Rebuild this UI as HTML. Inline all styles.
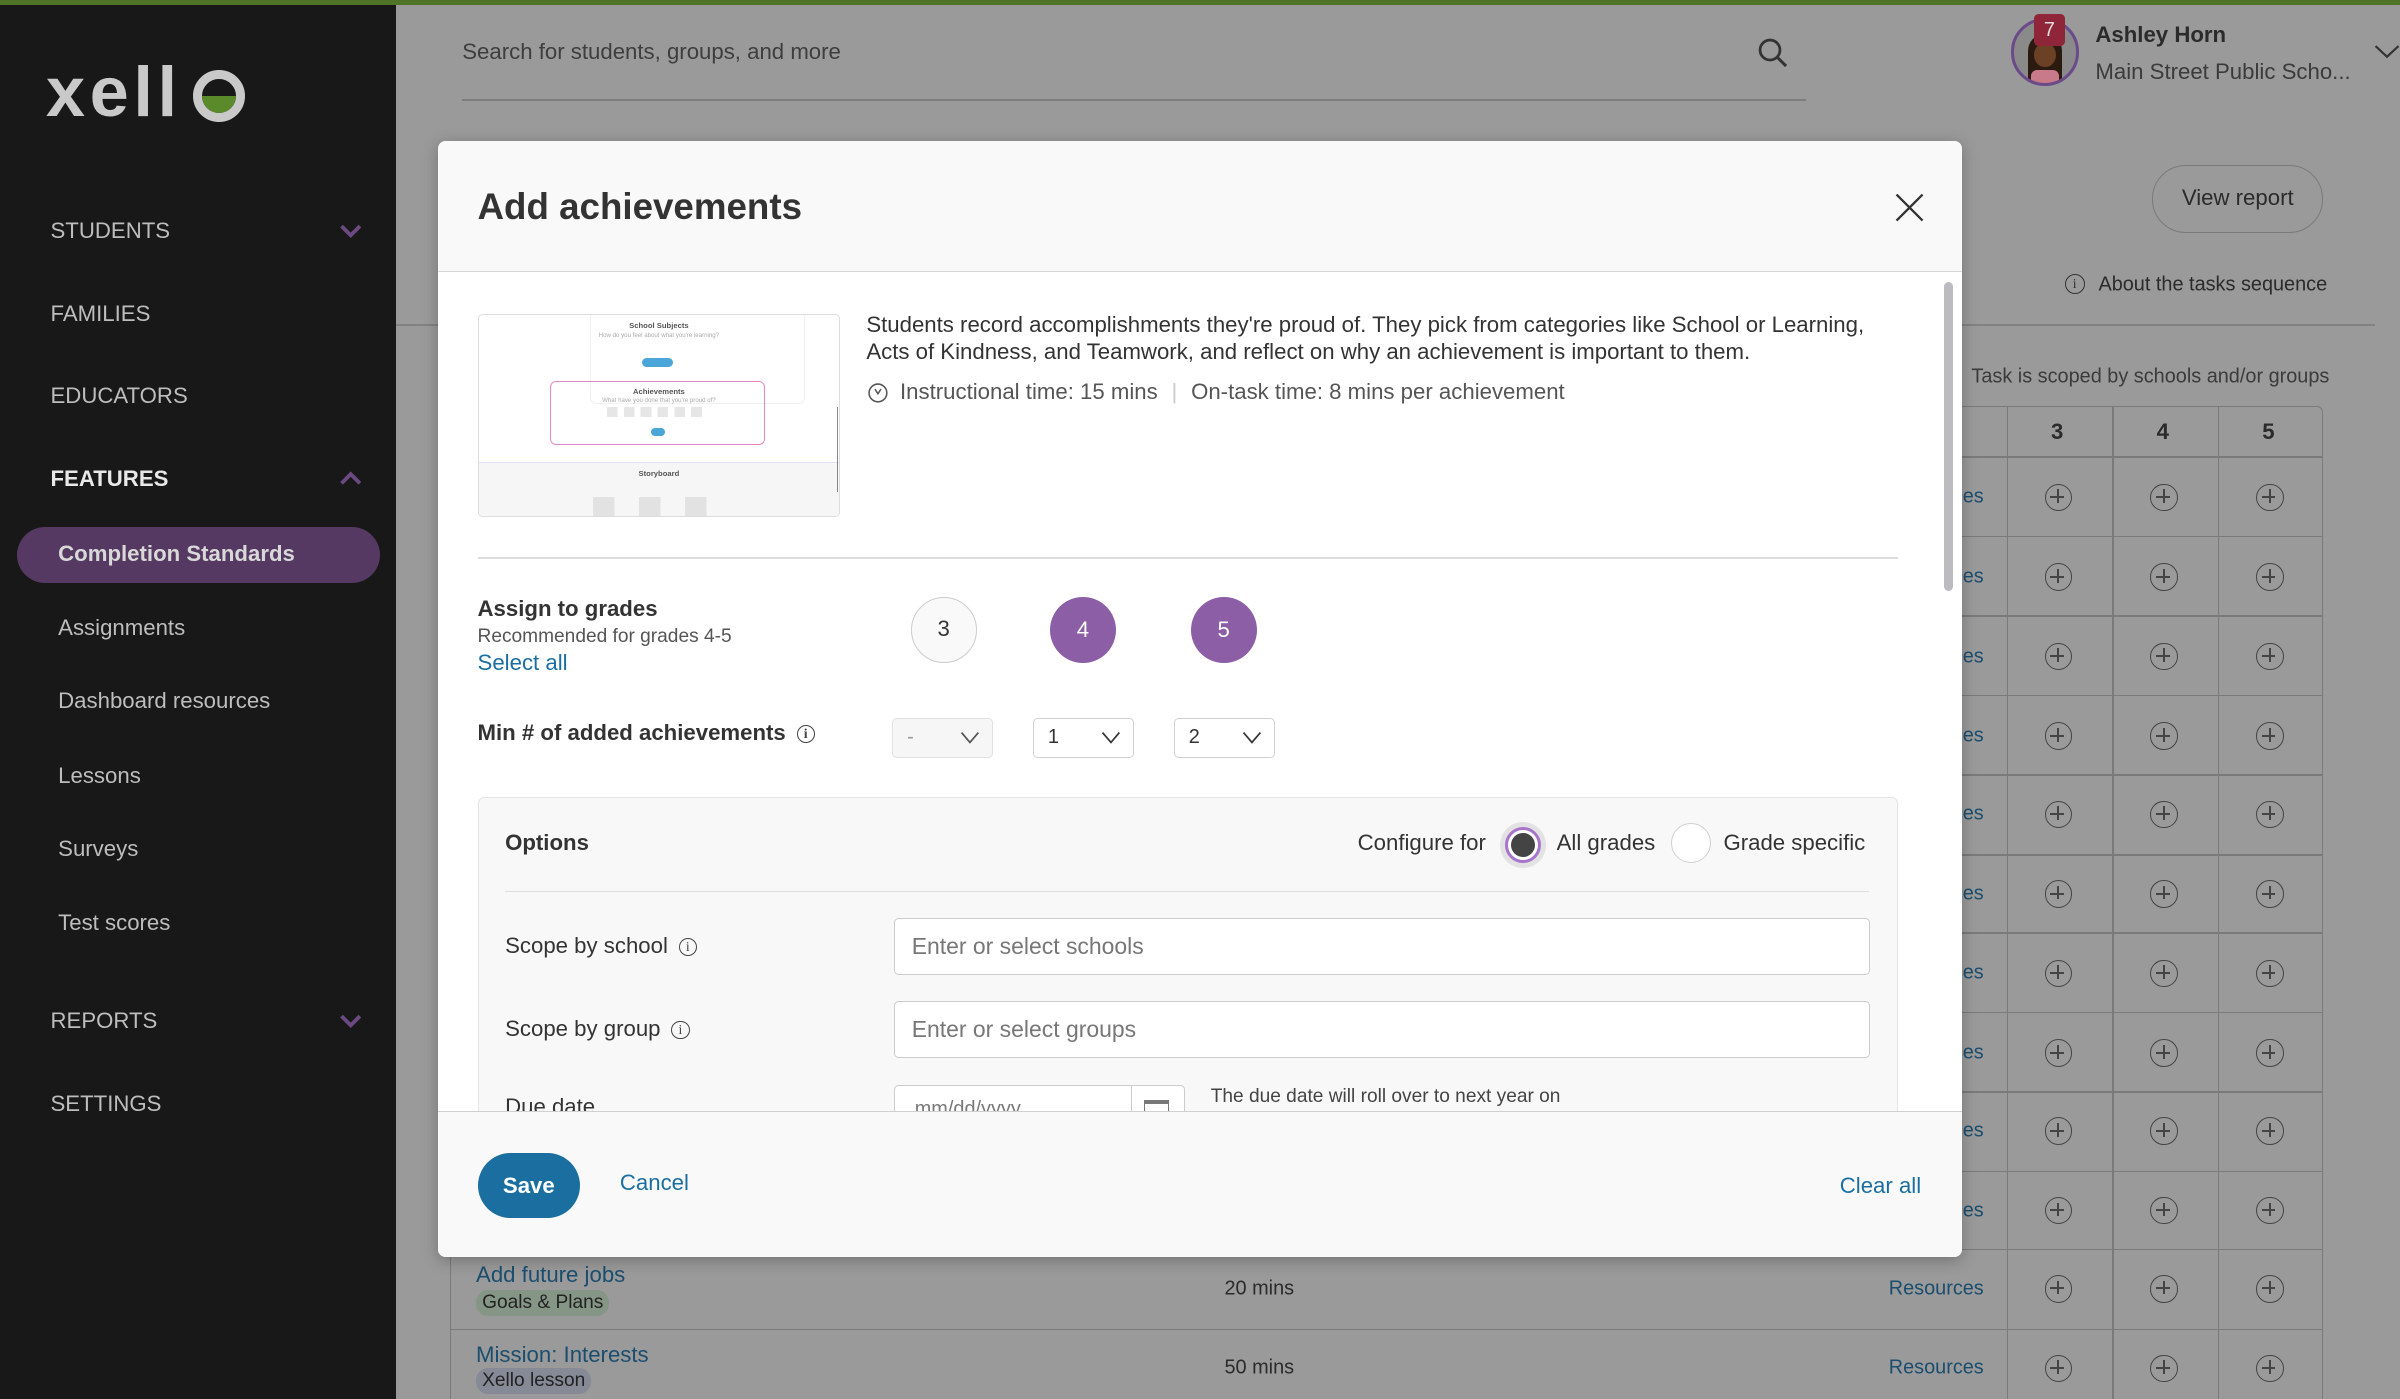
<!DOCTYPE html>
<html><head><meta charset="utf-8">
<style>
*{box-sizing:border-box;margin:0;padding:0}
html,body{width:2400px;height:1399px;overflow:hidden;background:#9a9a9a;font-family:"Liberation Sans",sans-serif}
#w{position:absolute;left:0;top:0;width:1568px;height:914px;zoom:1.5306;background:#9a9a9a;overflow:hidden}
.a{position:absolute;white-space:nowrap}
.side{position:absolute;left:0;top:0;width:259px;height:914px;background:#181818}
.nav{position:absolute;left:33px;font-size:14.5px;color:#bdbdbd;transform:translateY(-50%)}
.sub{position:absolute;left:38px;font-size:14.5px;color:#bdbdbd;transform:translateY(-50%)}
.chev{position:absolute;left:222px;width:14px;height:14px}
.mid{transform:translateY(-50%)}
.vl{position:absolute;top:265px;width:1px;height:649px;background:#7a7a7a}
.hl{position:absolute;left:294px;width:1224px;height:1px;background:#7a7a7a}
.plus{position:absolute;width:18px;height:18px;border:1.3px solid #444;border-radius:50%}
.plus:before{content:"";position:absolute;left:3px;top:7.5px;width:9px;height:1.3px;background:#444}
.plus:after{content:"";position:absolute;left:7.5px;top:3px;width:1.3px;height:9px;background:#444}
.res{position:absolute;left:1234px;font-size:13px;color:#1b4e6e;transform:translateY(-50%)}
.modal{position:absolute;left:286px;top:92px;width:996px;height:729px;background:#fff;border-radius:5px;overflow:hidden;box-shadow:0 2px 10px rgba(0,0,0,.25)}
.m{position:absolute;white-space:nowrap}
.sel{position:absolute;top:377px;width:66px;height:26px;border:1px solid #d0d0d0;border-radius:3px;background:#fff;font-size:13px;color:#333;padding:5px 0 0 9px}
.sel svg{position:absolute;right:8px;top:8px}
.inp{position:absolute;left:298px;width:638px;height:37px;border:1px solid #ccc;border-radius:3px;background:#fff;font-size:15px;color:#777;padding:9px 0 0 11px}
.info{display:inline-block;width:12px;height:12px;border:1px solid #444;border-radius:50%;font-size:9px;line-height:11px;text-align:center;vertical-align:middle;margin-left:3px;font-family:"Liberation Serif",serif;color:#444}
</style></head><body>
<div id="w">
<div class="a" style="left:0;top:0;width:1568px;height:3px;background:#4f7428;z-index:5"></div>
<!-- sidebar -->
<div class="side">
  <div class="a" style="left:30px;top:33px;font-size:46px;font-weight:bold;color:#c9c9c9;letter-spacing:3px">xell</div>
  <div class="a" style="left:126px;top:46px;width:34px;height:34px;border:6px solid #c9c9c9;border-radius:50%;overflow:hidden"><div style="position:absolute;left:0;top:11px;width:22px;height:11px;background:#5a8a2a;border-radius:0 0 11px 11px"></div></div>
  <div class="nav" style="top:151px">STUDENTS</div>
  <svg class="chev" style="top:144px" viewBox="0 0 14 14"><path d="M1 4 L7 10 L13 4" fill="none" stroke="#6a4a80" stroke-width="2.5"/></svg>
  <div class="nav" style="top:205px">FAMILIES</div>
  <div class="nav" style="top:259px">EDUCATORS</div>
  <div class="nav" style="top:313px;color:#e8e8e8;font-weight:bold">FEATURES</div>
  <svg class="chev" style="top:306px" viewBox="0 0 14 14"><path d="M1 10 L7 4 L13 10" fill="none" stroke="#6a4a80" stroke-width="2.5"/></svg>
  <div class="a" style="left:11px;top:344px;width:237px;height:37px;border-radius:19px;background:#553962"></div>
  <div class="sub" style="top:362px;color:#d8d8d8;font-weight:bold">Completion Standards</div>
  <div class="sub" style="top:410px">Assignments</div>
  <div class="sub" style="top:458px">Dashboard resources</div>
  <div class="sub" style="top:507px">Lessons</div>
  <div class="sub" style="top:555px">Surveys</div>
  <div class="sub" style="top:603px">Test scores</div>
  <div class="nav" style="top:667px">REPORTS</div>
  <svg class="chev" style="top:660px" viewBox="0 0 14 14"><path d="M1 4 L7 10 L13 4" fill="none" stroke="#6a4a80" stroke-width="2.5"/></svg>
  <div class="nav" style="top:721px">SETTINGS</div>
</div>
<!-- header -->
<div class="a mid" style="left:302px;top:34px;font-size:14.5px;color:#3e3e3e">Search for students, groups, and more</div>
<div class="a" style="left:302px;top:65px;width:878px;height:1px;background:#7d7d7d"></div>
<svg class="a" style="left:1148px;top:24px" width="21" height="21" viewBox="0 0 21 21"><circle cx="8.5" cy="8.5" r="6.5" fill="none" stroke="#333" stroke-width="1.8"/><path d="M13.5 13.5 L19 19" stroke="#333" stroke-width="2"/></svg>
<div class="a" style="left:1314px;top:12px;width:44px;height:44px;border:2px solid #6b4a8a;border-radius:50%;background:#8a8a8a;overflow:hidden">
  <div style="position:absolute;left:9px;top:8px;width:22px;height:34px;background:#2a1a10;border-radius:11px 11px 0 0"></div>
  <div style="position:absolute;left:13px;top:14px;width:14px;height:16px;background:#6b4126;border-radius:50%"></div>
  <div style="position:absolute;left:11px;top:32px;width:18px;height:10px;background:#c97a8a;border-radius:4px 4px 0 0"></div>
</div>
<div class="a" style="left:1329px;top:9px;width:20px;height:21px;background:#8e2538;border-radius:3px;color:#ddd;font-size:13px;text-align:center;line-height:21px">7</div>
<div class="a mid" style="left:1369px;top:23px;font-size:14.5px;font-weight:bold;color:#2b2b2b">Ashley Horn</div>
<div class="a mid" style="left:1369px;top:47px;font-size:14.5px;color:#3b3b3b">Main Street Public Scho...</div>
<svg class="a" style="left:1551px;top:28px" width="17" height="12" viewBox="0 0 17 12"><path d="M1 2 L8.5 9 L16 2" fill="none" stroke="#333" stroke-width="1.4"/></svg>
<div class="a" style="left:1406px;top:108px;width:112px;height:44px;border:1px solid #7a7a7a;border-radius:22px;font-size:14.5px;color:#2b2b2b;text-align:center;line-height:42px">View report</div>
<div class="a" style="left:1349px;top:179px;width:13px;height:13px;border:1px solid #333;border-radius:50%;font-size:9px;text-align:center;line-height:12px;color:#333;font-family:'Liberation Serif',serif">i</div>
<div class="a mid" style="left:1371px;top:186px;font-size:13px;color:#2b2b2b">About the tasks sequence</div>
<div class="a" style="left:259px;top:212px;width:1293px;height:1px;background:#828282"></div>
<div class="a mid" style="left:1288px;top:246px;font-size:13px;color:#3b3b3b">Task is scoped by schools and/or groups</div>
<!-- table -->
<div class="a" style="left:294px;top:265px;width:1224px;height:650px;border:1px solid #7a7a7a;border-radius:4px 4px 0 0"></div>
<div class="vl" style="left:1311px"></div><div class="vl" style="left:1380px"></div><div class="vl" style="left:1449px"></div>
<div class="a mid" style="left:1340px;top:282px;font-size:14.5px;font-weight:bold;color:#2b2b2b">3</div>
<div class="a mid" style="left:1409px;top:282px;font-size:14.5px;font-weight:bold;color:#2b2b2b">4</div>
<div class="a mid" style="left:1478px;top:282px;font-size:14.5px;font-weight:bold;color:#2b2b2b">5</div>
<div class="hl" style="top:298px"></div><div class="hl" style="top:350px"></div><div class="hl" style="top:402px"></div><div class="hl" style="top:454px"></div><div class="hl" style="top:506px"></div><div class="hl" style="top:558px"></div><div class="hl" style="top:609px"></div><div class="hl" style="top:661px"></div><div class="hl" style="top:713px"></div><div class="hl" style="top:765px"></div><div class="hl" style="top:816px"></div><div class="hl" style="top:868px"></div>
<div class="res" style="top:325px">Resources</div><div class="res" style="top:377px">Resources</div><div class="res" style="top:429px">Resources</div><div class="res" style="top:481px">Resources</div><div class="res" style="top:532px">Resources</div><div class="res" style="top:584px">Resources</div><div class="res" style="top:636px">Resources</div><div class="res" style="top:688px">Resources</div><div class="res" style="top:739px">Resources</div><div class="res" style="top:791px">Resources</div><div class="res" style="top:842px">Resources</div><div class="res" style="top:894px">Resources</div>
<div class="plus" style="left:1336px;top:316px"></div><div class="plus" style="left:1405px;top:316px"></div><div class="plus" style="left:1474px;top:316px"></div>
<div class="plus" style="left:1336px;top:368px"></div><div class="plus" style="left:1405px;top:368px"></div><div class="plus" style="left:1474px;top:368px"></div>
<div class="plus" style="left:1336px;top:420px"></div><div class="plus" style="left:1405px;top:420px"></div><div class="plus" style="left:1474px;top:420px"></div>
<div class="plus" style="left:1336px;top:472px"></div><div class="plus" style="left:1405px;top:472px"></div><div class="plus" style="left:1474px;top:472px"></div>
<div class="plus" style="left:1336px;top:523px"></div><div class="plus" style="left:1405px;top:523px"></div><div class="plus" style="left:1474px;top:523px"></div>
<div class="plus" style="left:1336px;top:575px"></div><div class="plus" style="left:1405px;top:575px"></div><div class="plus" style="left:1474px;top:575px"></div>
<div class="plus" style="left:1336px;top:627px"></div><div class="plus" style="left:1405px;top:627px"></div><div class="plus" style="left:1474px;top:627px"></div>
<div class="plus" style="left:1336px;top:679px"></div><div class="plus" style="left:1405px;top:679px"></div><div class="plus" style="left:1474px;top:679px"></div>
<div class="plus" style="left:1336px;top:730px"></div><div class="plus" style="left:1405px;top:730px"></div><div class="plus" style="left:1474px;top:730px"></div>
<div class="plus" style="left:1336px;top:782px"></div><div class="plus" style="left:1405px;top:782px"></div><div class="plus" style="left:1474px;top:782px"></div>
<div class="plus" style="left:1336px;top:833px"></div><div class="plus" style="left:1405px;top:833px"></div><div class="plus" style="left:1474px;top:833px"></div>
<div class="plus" style="left:1336px;top:885px"></div><div class="plus" style="left:1405px;top:885px"></div><div class="plus" style="left:1474px;top:885px"></div>
<div class="a mid" style="left:311px;top:833px;font-size:14.5px;color:#1b4e6e">Add future jobs</div>
<div class="a" style="left:311px;top:843px;height:17px;padding:0 4px;border-radius:8px;background:#869686;font-size:12.5px;color:#222;line-height:17px">Goals &amp; Plans</div>
<div class="a mid" style="left:800px;top:842px;font-size:13px;color:#2b2b2b">20 mins</div>
<div class="a mid" style="left:311px;top:885px;font-size:14.5px;color:#1b4e6e">Mission: Interests</div>
<div class="a" style="left:311px;top:894px;height:17px;padding:0 4px;border-radius:8px;background:#868a96;font-size:12.5px;color:#222;line-height:17px">Xello lesson</div>
<div class="a mid" style="left:800px;top:894px;font-size:13px;color:#2b2b2b">50 mins</div>
<!-- modal -->
<div class="modal">
  <div class="m" style="left:0;top:0;width:996px;height:86px;background:#f9f9f9;border-bottom:1px solid #d6d6d6"></div>
  <div class="m mid" style="left:26px;top:43px;font-size:24px;font-weight:bold;color:#333">Add achievements</div>
  <svg class="m" style="left:952px;top:34px" width="19" height="19" viewBox="0 0 19 19"><path d="M1 1 L18 18 M18 1 L1 18" stroke="#333" stroke-width="1.5"/></svg>
  <div class="m" style="left:984px;top:92px;width:6px;height:202px;border-radius:3px;background:#bbbbc0"></div>
  <!-- thumbnail -->
  <div class="m" style="left:26px;top:113px;width:237px;height:133px;border:1px solid #ddd;border-radius:3px;background:#fff;overflow:hidden">
    <div style="position:absolute;left:73px;top:-2px;width:140px;height:60px;border:1px solid #f0f0f0;border-radius:4px"></div>
    <div style="position:absolute;left:0;width:100%;top:4px;text-align:center;font-size:5px;font-weight:bold;color:#555">School Subjects</div>
    <div style="position:absolute;left:0;width:100%;top:11px;text-align:center;font-size:4px;color:#aaa">How do you feel about what you're learning?</div>
    <div style="position:absolute;left:107px;top:28px;width:20px;height:6px;border-radius:3px;background:#4aa6d8"></div>
    <div style="position:absolute;left:47px;top:43px;width:140px;height:42px;border:1px solid #e58ac0;border-radius:4px"></div>
    <div style="position:absolute;left:0;width:100%;top:47px;text-align:center;font-size:5px;font-weight:bold;color:#555">Achievements</div>
    <div style="position:absolute;left:0;width:100%;top:54px;text-align:center;font-size:4px;color:#aaa">What have you done that you're proud of?</div>
    <div style="position:absolute;left:84px;top:60px;width:66px;height:7px;background:repeating-linear-gradient(90deg,#e6e6e6 0 7px,transparent 7px 11px)"></div>
    <div style="position:absolute;left:113px;top:74px;width:9px;height:5px;border-radius:3px;background:#4aa6d8"></div>
    <div style="position:absolute;left:0;top:96px;width:100%;height:40px;background:#f6f6f6;border-top:1px solid #eadcf3"></div>
    <div style="position:absolute;left:0;width:100%;top:101px;text-align:center;font-size:5px;font-weight:bold;color:#555">Storyboard</div>
    <div style="position:absolute;left:75px;top:119px;width:86px;height:14px;background:repeating-linear-gradient(90deg,#e2e2e2 0 14px,transparent 14px 30px)"></div>
    <div style="position:absolute;left:234px;top:60px;width:1px;height:56px;background:#888"></div>
  </div>
  <div class="m" style="left:280px;top:112px;font-size:14.5px;line-height:17.5px;color:#333;white-space:normal;width:668px">Students record accomplishments they're proud of. They pick from categories like School or Learning, Acts of Kindness, and Teamwork, and reflect on why an achievement is important to them.</div>
  <svg class="m" style="left:281px;top:158px" width="13" height="13" viewBox="0 0 13 13"><circle cx="6.5" cy="6.5" r="5.8" fill="none" stroke="#555" stroke-width="1"/><path d="M4.5 4 L6.5 7 L8.5 4" fill="none" stroke="#555" stroke-width="1"/></svg>
  <div class="m mid" style="left:302px;top:164px;font-size:14.5px;color:#555">Instructional time: 15 mins <span style="color:#ccc;margin:0 5px">|</span> On-task time: 8 mins per achievement</div>
  <div class="m" style="left:26px;top:272px;width:928px;height:1px;background:#ddd"></div>
  <div class="m mid" style="left:26px;top:306px;font-size:14.5px;font-weight:bold;color:#333">Assign to grades</div>
  <div class="m mid" style="left:26px;top:324px;font-size:12.5px;color:#555">Recommended for grades 4-5</div>
  <div class="m mid" style="left:26px;top:341px;font-size:14.5px;color:#1a6fa0">Select all</div>
  <div class="m" style="left:309px;top:298px;width:43px;height:43px;border:1px solid #ccc;border-radius:50%;background:#f9f9f9;text-align:center;line-height:41px;font-size:14.5px;color:#333">3</div>
  <div class="m" style="left:400px;top:298px;width:43px;height:43px;border-radius:50%;background:#8c5ea6;text-align:center;line-height:43px;font-size:14.5px;color:#fff">4</div>
  <div class="m" style="left:492px;top:298px;width:43px;height:43px;border-radius:50%;background:#8c5ea6;text-align:center;line-height:43px;font-size:14.5px;color:#fff">5</div>
  <div class="m mid" style="left:26px;top:387px;font-size:14.5px;font-weight:bold;color:#333">Min # of added achievements <span class="info">i</span></div>
  <div class="sel" style="left:297px;background:#f6f6f6;border-color:#e0e0e0;color:#999">-<svg width="13" height="9" viewBox="0 0 13 9"><path d="M1 1 L6.5 7.5 L12 1" fill="none" stroke="#555" stroke-width="1.1"/></svg></div>
  <div class="sel" style="left:389px">1<svg width="13" height="9" viewBox="0 0 13 9"><path d="M1 1 L6.5 7.5 L12 1" fill="none" stroke="#333" stroke-width="1.1"/></svg></div>
  <div class="sel" style="left:481px">2<svg width="13" height="9" viewBox="0 0 13 9"><path d="M1 1 L6.5 7.5 L12 1" fill="none" stroke="#333" stroke-width="1.1"/></svg></div>
  <!-- options -->
  <div class="m" style="left:26px;top:429px;width:928px;height:260px;border:1px solid #e4e4e4;border-radius:4px;background:#f8f8f8"></div>
  <div class="m mid" style="left:44px;top:459px;font-size:14.5px;font-weight:bold;color:#333">Options</div>
  <div class="m mid" style="left:601px;top:459px;font-size:14.5px;color:#333">Configure for</div>
  <div class="m" style="left:694px;top:445px;width:30px;height:30px;border-radius:50%;background:#e2e2e2"></div>
  <div class="m" style="left:697px;top:448px;width:24px;height:24px;border-radius:50%;background:#fff;border:2px solid #a974cc"></div>
  <div class="m" style="left:701px;top:452px;width:16px;height:16px;border-radius:50%;background:#444"></div>
  <div class="m mid" style="left:731px;top:459px;font-size:14.5px;color:#333">All grades</div>
  <div class="m" style="left:806px;top:446px;width:26px;height:26px;border-radius:50%;background:#fff;border:1px solid #d0d0d0"></div>
  <div class="m mid" style="left:840px;top:459px;font-size:14.5px;color:#333">Grade specific</div>
  <div class="m" style="left:44px;top:490px;width:891px;height:1px;background:#ddd"></div>
  <div class="m mid" style="left:44px;top:526px;font-size:14.5px;color:#333">Scope by school <span class="info">i</span></div>
  <div class="inp" style="top:508px">Enter or select schools</div>
  <div class="m mid" style="left:44px;top:580px;font-size:14.5px;color:#333">Scope by group <span class="info">i</span></div>
  <div class="inp" style="top:562px">Enter or select groups</div>
  <div class="m" style="left:44px;top:623px;font-size:14.5px;color:#333">Due date</div>
  <div class="m" style="left:298px;top:617px;width:190px;height:30px;border:1px solid #ccc;border-radius:3px;background:#fff;font-size:13px;color:#777;padding:8px 0 0 13px">mm/dd/yyyy<div style="position:absolute;left:154px;top:0;width:1px;height:30px;background:#ccc"></div><div style="position:absolute;left:163px;top:9px;width:16px;height:13px;border:1px solid #777;border-top:3px solid #777"></div></div>
  <div class="m mid" style="left:505px;top:625px;font-size:12.5px;color:#444">The due date will roll over to next year on</div>
  <!-- footer -->
  <div class="m" style="left:0;top:634px;width:996px;height:95px;background:#f9f9f9;border-top:1px solid #d0d0d0"></div>
  <div class="m" style="left:26px;top:661px;width:67px;height:43px;border-radius:22px;background:#1a6fa0;color:#fff;font-size:14.5px;font-weight:bold;text-align:center;line-height:43px">Save</div>
  <div class="m mid" style="left:119px;top:681px;font-size:14.5px;color:#1a6fa0">Cancel</div>
  <div class="m mid" style="left:916px;top:683px;font-size:14.5px;color:#1a6fa0">Clear all</div>
</div>
</div>
</body></html>
